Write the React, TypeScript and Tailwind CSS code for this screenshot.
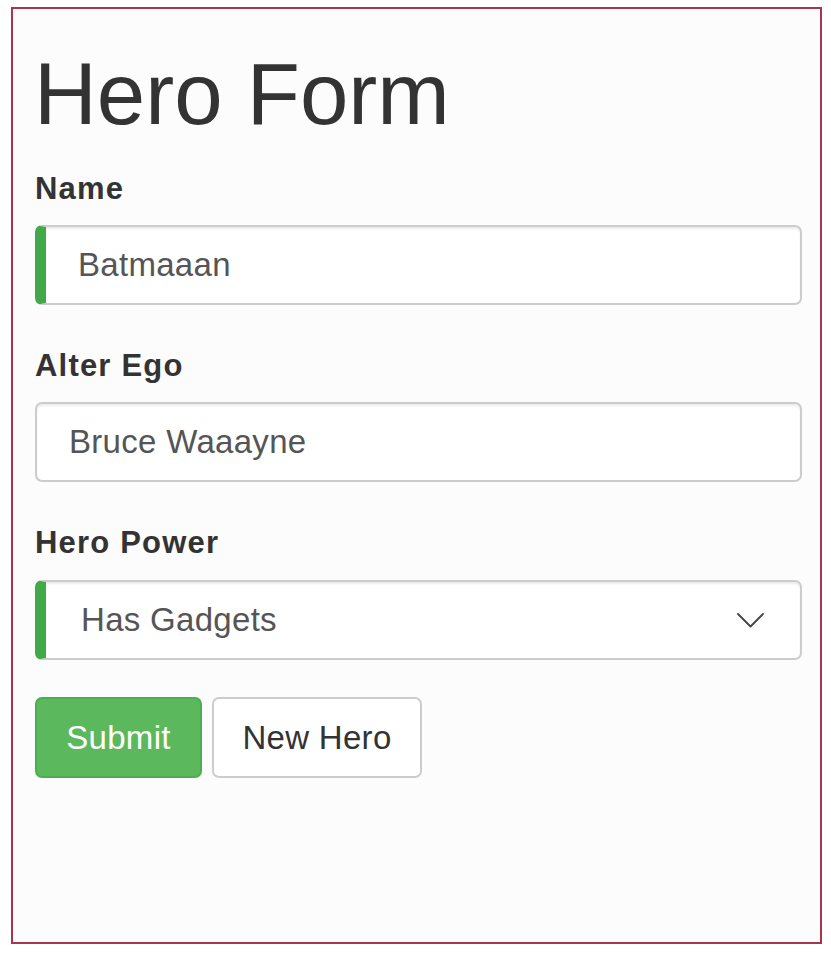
import React from "react";

export default function App() {
  return (
    <div
      className="min-h-[954px] w-[831px] bg-white pl-[11px] pt-[7px]"
      style={{ fontFamily: '"Liberation Sans", Arial, Helvetica, sans-serif' }}
    >
      <div className="box-border h-[937px] w-[811px] border-2 border-[#a8344f] bg-[#fcfcfc] pl-[22px] pr-[18px] pt-[37px]">
        <h1 className="text-[87px] leading-[96px] font-normal text-[#333333] ml-[-1px]">Hero Form</h1>
        <form className="mt-[27px]" onSubmit={(e) => e.preventDefault()}>
          <div className="mb-[41px]">
            <label className="block text-[31px] leading-[40px] tracking-[1.2px] font-bold text-[#333333] mb-[16px]">Name</label>
            <div className="box-border flex h-[80px] items-center rounded-[7px] border-2 border-l-[11px] border-[#cccccc] border-l-[#42a948] bg-white pl-[32px] shadow-[inset_0_2px_2px_rgba(0,0,0,0.08)]">
              <span className="text-[33px] tracking-[0.3px] text-[#555555]">Batmaaan</span>
            </div>
          </div>
          <div className="mb-[41px]">
            <label className="block text-[31px] leading-[40px] tracking-[1.2px] font-bold text-[#333333] mb-[16px]">Alter Ego</label>
            <div className="box-border flex h-[80px] items-center rounded-[7px] border-2 border-[#cccccc] bg-white pl-[32px] shadow-[inset_0_2px_2px_rgba(0,0,0,0.08)]">
              <span className="text-[33px] tracking-[0.3px] text-[#555555]">Bruce Waaayne</span>
            </div>
          </div>
          <div className="mb-[37px]">
            <label className="block text-[31px] leading-[40px] tracking-[1.2px] font-bold text-[#333333] mb-[17px]">Hero Power</label>
            <div className="box-border flex h-[80px] items-center justify-between rounded-[7px] border-2 border-l-[11px] border-[#cccccc] border-l-[#42a948] bg-white pl-[35px] pr-[36px] shadow-[inset_0_2px_2px_rgba(0,0,0,0.08)]">
              <span className="text-[33px] tracking-[0.3px] text-[#555555]">Has Gadgets</span>
              <svg width="27" height="15" viewBox="0 0 27 15" fill="none">
                <polyline points="1,1 13.5,13.5 26,1" stroke="#444444" strokeWidth="1.8" strokeLinecap="round" strokeLinejoin="round" />
              </svg>
            </div>
          </div>
          <div className="flex gap-[10px]">
            <button
              type="submit"
              className="box-border h-[81px] w-[167px] rounded-[7px] border-2 border-[#4cae4c] bg-[#5cb85c] text-[33px] tracking-[0.3px] text-white"
            >
              Submit
            </button>
            <button
              type="button"
              className="box-border h-[81px] w-[210px] rounded-[7px] border-2 border-[#cccccc] bg-white text-[33px] tracking-[0.3px] text-[#333333]"
            >
              New Hero
            </button>
          </div>
        </form>
      </div>
    </div>
  );
}
